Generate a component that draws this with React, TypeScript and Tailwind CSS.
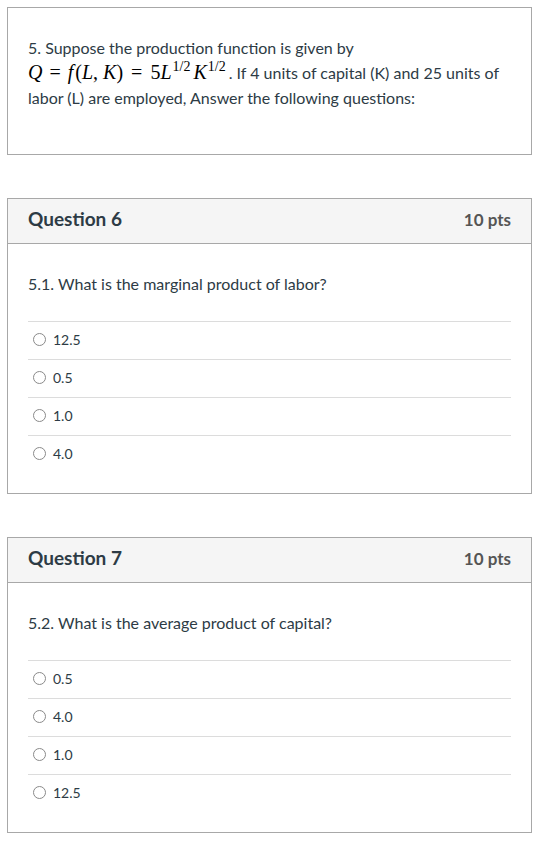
import React from 'react';

const font = { fontFamily: 'Lato, "Open Sans", sans-serif' };
const mathFont = { fontFamily: '"Liberation Serif", "DejaVu Serif", serif' };

function Radio({ label }: { label: string }) {
  return (
    <div className="flex h-[38px] items-center border-t border-[#dcdcdc] pb-[2px] pl-[5px]">
      <span className="h-[13px] w-[13px] rounded-full border border-[#8a8a8a] bg-white" />
      <span className="ml-[7px] text-[14px] text-[#2d3b45]">{label}</span>
    </div>
  );
}

function Question({ num, text, answers }: { num: number; text: string; answers: string[] }) {
  return (
    <div className="w-[525px] border border-[#a8a8a8] bg-white">
      <div className="flex h-[45px] items-center justify-between border-b border-[#a8a8a8] bg-[#f5f5f5] pb-[3px] pl-[20px] pr-[20px]">
        <h2 className="text-[19px] font-bold text-[#2d3b45]">Question {num}</h2>
        <span className="text-[17px] font-bold text-[#555555]">10 pts</span>
      </div>
      <div className="px-[20px] pt-[27px] pb-[20px]">
        <p className="text-[16px] leading-[25px] text-[#2d3b45]">{text}</p>
        <div className="mt-[25px]">
          {answers.map((a) => (
            <Radio key={a} label={a} />
          ))}
        </div>
      </div>
    </div>
  );
}

function Sup({ children }: { children: React.ReactNode }) {
  return <sup className="relative top-[-8px] ml-[1px] mr-[3px] align-baseline text-[14px] leading-none">{children}</sup>;
}

export default function App() {
  return (
    <div className="min-h-[842px] bg-white px-[7px] pt-[7px]" style={font}>
      {/* Intro Section */}
      <div className="h-[148px] w-[525px] border border-[#a8a8a8] px-[20px] pt-[27px]">
        <p className="text-[16px] leading-[25px] text-[#2d3b45]">
          5. Suppose the production function is given by
          <br />
          <span className="text-[20px] leading-none text-black" style={mathFont}>
            <i>Q</i>
            <span className="mx-[7px]">=</span>
            <i>f</i>
            <span className="ml-[2px]">(</span>
            <i>L</i>,<span className="ml-[5px]" />
            <i>K</i>)
            <span className="mx-[8px]">=</span>
            5<i>L</i>
            <Sup>1/2</Sup>
            <i>K</i>
            <Sup>1/2</Sup>
          </span>
          . If 4 units of capital (K) and 25 units of labor (L) are employed, Answer the following questions:
        </p>
      </div>

      <div className="mt-[43px]">
        <Question num={6} text="5.1. What is the marginal product of labor?" answers={['12.5', '0.5', '1.0', '4.0']} />
      </div>

      <div className="mt-[43px]">
        <Question num={7} text="5.2. What is the average product of capital?" answers={['0.5', '4.0', '1.0', '12.5']} />
      </div>
    </div>
  );
}
